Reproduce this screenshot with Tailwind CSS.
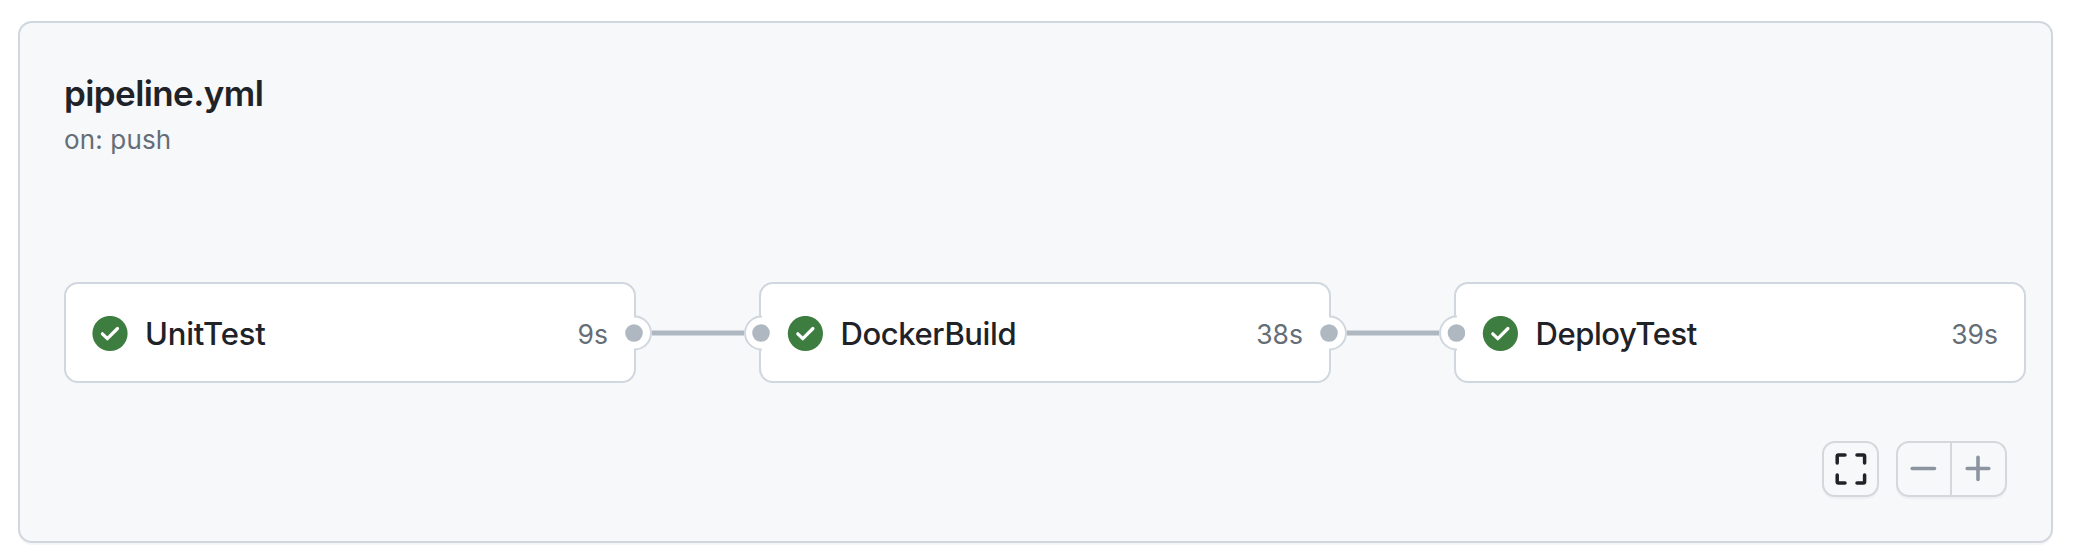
<!DOCTYPE html>
<html lang="en">
<head>
<meta charset="utf-8">
<title>pipeline.yml</title>
<script src="https://cdn.jsdelivr.net/npm/@tailwindcss/browser@4"></script>
</head>
<body class="bg-white font-['Inter',sans-serif] text-[#1f2328]">
<div class="h-[560px] w-[2074px] overflow-hidden pt-[21px] pl-[18px]">
  <main class="flex h-[522px] w-[2035px] flex-col rounded-[14px] border-2 border-[#d0d7de] bg-[#f6f8fa] pl-[44px] shadow-[0_2px_1px_rgba(31,35,40,0.04)]">
    <header class="h-[259px] pt-[47px]">
      <h1 class="w-max text-[35px] leading-[46px] font-semibold tracking-[-0.6px]">pipeline.yml</h1>
      <p class="mt-px w-max text-[26px] leading-[46px] tracking-[0.15px] text-[#656d76]">on: push</p>
    </header>

    <section class="flex h-[101px] items-center">
      <article class="flex h-[101px] w-[572px] shrink-0 items-center rounded-[14px] border-2 border-[#d0d7de] bg-white pr-[26px] pl-[26px]">
        <svg class="mt-[2px] size-[36px] shrink-0" viewBox="0 0 36 36"><circle cx="18" cy="17.5" r="17.6" fill="#3d7e40"/><path d="M10.4 17.8 15.4 22.7 25.5 12.5" fill="none" stroke="#fff" stroke-width="3.2" stroke-linecap="round" stroke-linejoin="round"/></svg>
        <span class="mt-[2px] ml-[17px] text-[31px] leading-[40px] font-medium tracking-[-0.2px]">UnitTest</span>
        <span class="mt-[2px] ml-auto text-[26.5px] leading-[40px] text-[#656d76]">9s</span>
      </article>
      <svg class="relative -mx-[11px] h-[40px] w-[145px] shrink-0" viewBox="0 0 145 40">
        <path d="M27 20H119" stroke="#afb8c1" stroke-width="5"/>
        <path d="M7 3.5H9.5A16.5 16.5 0 0 1 9.5 36.5H7Z" fill="#fff"/>
        <path d="M9 3.5H9.5A16.5 16.5 0 0 1 9.5 36.5H9" fill="none" stroke="#d0d7de" stroke-width="2"/>
        <path d="M138 3.5H136.5A16.5 16.5 0 0 0 136.5 36.5H138Z" fill="#fff"/>
        <path d="M137 3.5H136.5A16.5 16.5 0 0 0 136.5 36.5H137" fill="none" stroke="#d0d7de" stroke-width="2"/>
        <circle cx="9" cy="20" r="8.8" fill="#afb8c1"/><circle cx="136" cy="20" r="8.8" fill="#afb8c1"/>
      </svg>
      <article class="flex h-[101px] w-[572px] shrink-0 items-center rounded-[14px] border-2 border-[#d0d7de] bg-white pr-[26px] pl-[26px]">
        <svg class="mt-[2px] size-[36px] shrink-0" viewBox="0 0 36 36"><circle cx="18.4" cy="17.5" r="17.6" fill="#3d7e40"/><path d="M10.8 17.8 15.8 22.7 25.9 12.5" fill="none" stroke="#fff" stroke-width="3.2" stroke-linecap="round" stroke-linejoin="round"/></svg>
        <span class="mt-[2px] ml-[17.5px] text-[31px] leading-[40px] font-medium tracking-[-0.4px]">DockerBuild</span>
        <span class="mt-[2px] ml-auto text-[26.5px] leading-[40px] text-[#656d76]">38s</span>
      </article>
      <svg class="relative -mx-[11px] h-[40px] w-[145px] shrink-0" viewBox="0 0 145 40">
        <path d="M27 20H119" stroke="#afb8c1" stroke-width="5"/>
        <path d="M7 3.5H9.5A16.5 16.5 0 0 1 9.5 36.5H7Z" fill="#fff"/>
        <path d="M9 3.5H9.5A16.5 16.5 0 0 1 9.5 36.5H9" fill="none" stroke="#d0d7de" stroke-width="2"/>
        <path d="M138 3.5H136.5A16.5 16.5 0 0 0 136.5 36.5H138Z" fill="#fff"/>
        <path d="M137 3.5H136.5A16.5 16.5 0 0 0 136.5 36.5H137" fill="none" stroke="#d0d7de" stroke-width="2"/>
        <circle cx="9" cy="20" r="8.8" fill="#afb8c1"/><circle cx="136.5" cy="20" r="8.8" fill="#afb8c1"/>
      </svg>
      <article class="flex h-[101px] w-[572px] shrink-0 items-center rounded-[14px] border-2 border-[#d0d7de] bg-white pr-[26px] pl-[26px]">
        <svg class="mt-[2px] size-[36px] shrink-0" viewBox="0 0 36 36"><circle cx="18.4" cy="17.5" r="17.6" fill="#3d7e40"/><path d="M10.8 17.8 15.8 22.7 25.9 12.5" fill="none" stroke="#fff" stroke-width="3.2" stroke-linecap="round" stroke-linejoin="round"/></svg>
        <span class="mt-[2px] ml-[17.5px] text-[31px] leading-[40px] font-medium tracking-[-0.45px]">DeployTest</span>
        <span class="mt-[2px] ml-auto text-[26.5px] leading-[40px] text-[#656d76]">39s</span>
      </article>
    </section>

    <div class="mt-[58px] mr-[44px] flex justify-end gap-[17px]">
      <button aria-label="Fit" class="flex h-[56px] w-[57px] items-center justify-center rounded-[13px] border-2 border-[#d5d8da] bg-[#f6f8fa] shadow-[0_2px_1px_rgba(31,35,40,0.04)]">
        <svg class="h-[32px] w-[32px]" viewBox="0 0 32 32" fill="none" stroke="#1f2328" stroke-width="3.5" stroke-linecap="round" stroke-linejoin="round"><path d="M2.2 10V3.2Q2.2 2 3.4 2H10M22 2H28.4Q29.6 2 29.6 3.2V10M29.6 22V28.8Q29.6 30 28.4 30H22M10 30H3.4Q2.2 30 2.2 28.8V22"/></svg>
      </button>
      <div class="flex h-[56px] w-[111px] rounded-[13px] border-2 border-[#d5d8da] bg-[#f6f8fa] shadow-[0_2px_1px_rgba(31,35,40,0.04)]">
        <button aria-label="Zoom out" class="w-[54px] border-r-2 border-[#d5d8da]"><svg class="h-[52px] w-[52px]" viewBox="0 0 52 52"><path d="M14.2 25.5H36.5" stroke="#8c959f" stroke-width="3.6" stroke-linecap="round"/></svg></button>
        <button aria-label="Zoom in" class="w-[53px]"><svg class="h-[52px] w-[53px]" viewBox="0 0 53 52"><path d="M15.2 25.5H36.8M26 14.2V36.5" stroke="#8c959f" stroke-width="3.6" stroke-linecap="round"/></svg></button>
      </div>
    </div>
  </main>
</div>
</body>
</html>
